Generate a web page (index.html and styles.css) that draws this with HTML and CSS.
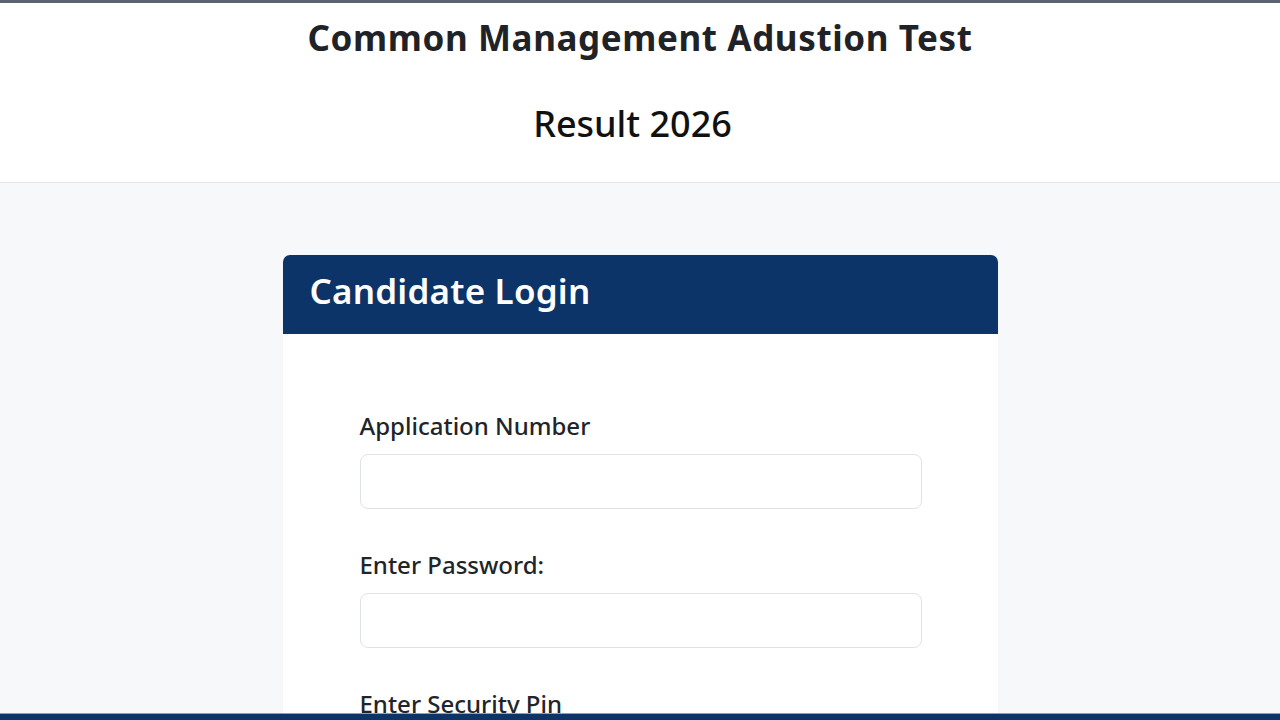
FILE: index.html
```html
<!DOCTYPE html>
<html lang="en">
<head>
<meta charset="utf-8">
<title>Common Management Adustion Test Result 2026</title>
<link rel="stylesheet" href="styles.css">
</head>
<body>
<header class="site-header">
  <h1 class="title">Common Management Adustion Test</h1>
  <h2 class="subtitle">Result 2026</h2>
</header>
<main class="main">
  <section class="card">
    <div class="card-head">
      <h3 class="card-title">Candidate Login</h3>
    </div>
    <form class="card-body">
      <div class="field">
        <label class="label" for="app">Application Number</label>
        <input class="input" id="app" type="text">
      </div>
      <div class="field">
        <label class="label" for="pw">Enter Password:</label>
        <input class="input" id="pw" type="password">
      </div>
      <div class="field">
        <label class="label" for="pin">Enter Security Pin</label>
        <input class="input" id="pin" type="text">
      </div>
    </form>
  </section>
</main>
<div class="bottom-bar"></div>
</body>
</html>
```
FILE: styles.css
```css
* { box-sizing: border-box; }
html, body { margin: 0; padding: 0; }
body {
  background: #f6f8fa;
  font-family: "Noto Sans", "Open Sans", sans-serif;
  color: #212529;
  border-top: 3px solid #5b646e;
}
.site-header {
  background: #fff;
  border-bottom: 1px solid #e2e5e9;
  text-align: center;
  height: 180px;
  padding-top: 12px;
}
.title {
  margin: 0;
  font-size: 35px;
  font-weight: 700;
  line-height: 46px;
  letter-spacing: 0.6px;
  color: #1f2226;
}
.subtitle {
  margin: 38px 0 0;
  padding-right: 15px;
  font-size: 36px;
  font-weight: 500;
  line-height: 50px;
  color: #111;
}
.main {
  padding-top: 72px;
}
.card {
  width: 715px;
  margin: 0 auto;
  background: #fff;
  border-radius: 7px;
  overflow: hidden;
  box-shadow: 0 0 2px rgba(0,0,0,0.04);
}
.card-head {
  background: #0c3469;
  height: 79px;
  display: flex;
  align-items: center;
  padding: 0 0 9px 27px;
}
.card-title {
  margin: 0;
  color: #fff;
  font-size: 35px;
  font-weight: 600;
  line-height: 1;
  letter-spacing: 0.2px;
}
.card-body {
  padding: 77px 76px 40px 77px;
  display: flex;
  flex-direction: column;
  gap: 41px;
}
.field {
  display: flex;
  flex-direction: column;
  gap: 13px;
}
.label {
  font-size: 24px;
  font-weight: 500;
  color: #212529;
  line-height: 30px;
}
.input {
  width: 562px;
  height: 55px;
  border: 1px solid #dfe2e6;
  border-radius: 8px;
  background: #fff;
  font-size: 18px;
}
.bottom-bar {
  position: fixed;
  left: 0;
  right: 0;
  bottom: 0;
  height: 7px;
  background: #0c3469;
  border-top: 1px solid #8aa0bb;
}
```
